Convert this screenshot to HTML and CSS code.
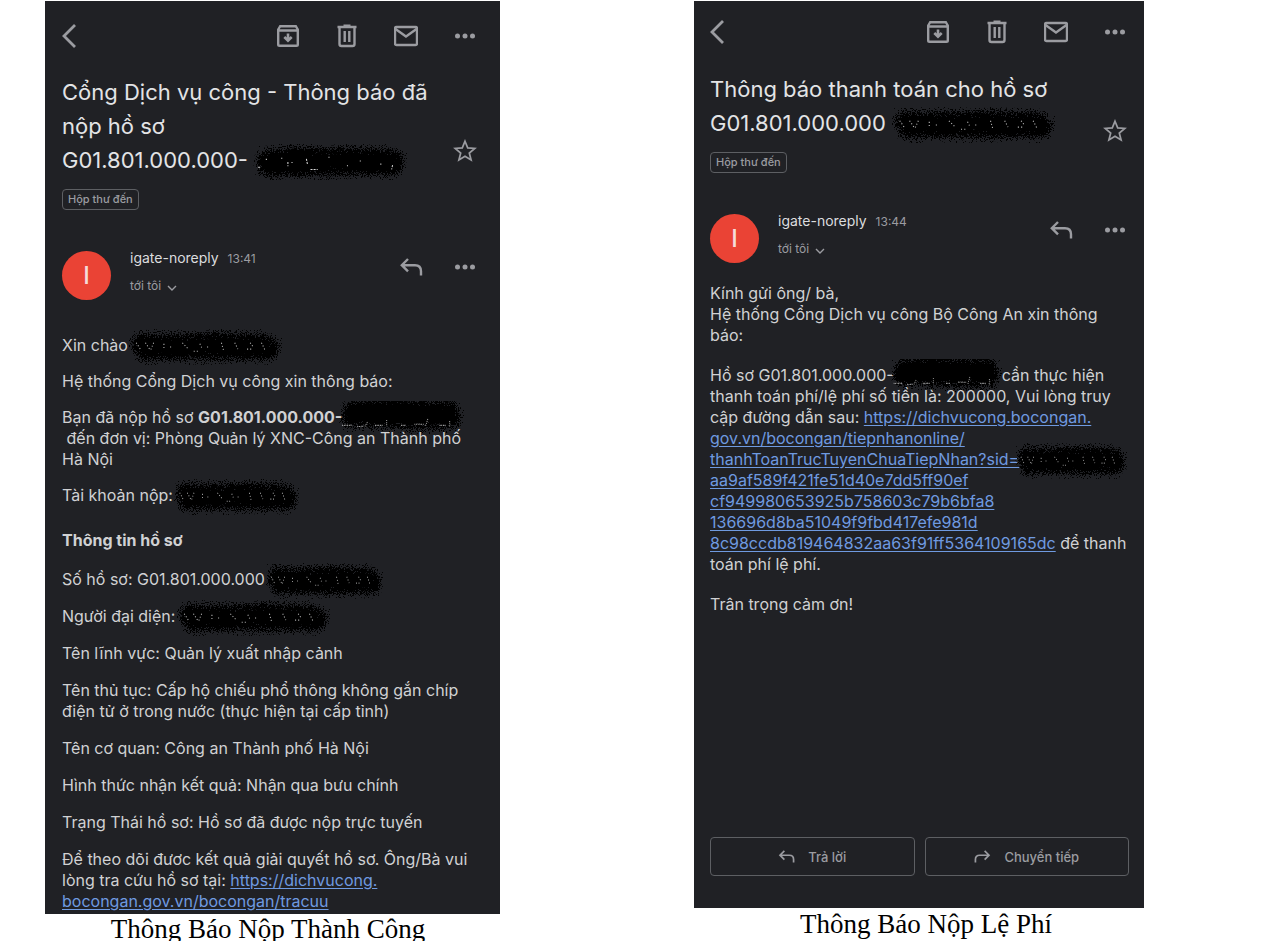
FILE: index.html
```
<!DOCTYPE html>
<html lang="vi">
<head>
<meta charset="utf-8">
<title>Thông báo hồ sơ</title>
<link rel="stylesheet" href="styles.css">
</head>
<body>
<svg class="defs" aria-hidden="true">
  <defs>
    <filter id="spray" filterUnits="userSpaceOnUse" x="-10" y="-12" width="170" height="58" color-interpolation-filters="sRGB">
      <feTurbulence type="fractalNoise" baseFrequency="0.9" numOctaves="2" seed="4" result="n"/>
      <feDisplacementMap in="SourceGraphic" in2="n" scale="24" xChannelSelector="R" yChannelSelector="G"/>
    </filter>
    <symbol id="i-back" viewBox="0 0 24 24"><path d="M17 1 6 12l11 11" fill="none" stroke="currentColor" stroke-width="2.8"/></symbol>
    <symbol id="i-archive" viewBox="0 0 24 24"><path d="M2.200 5.500 4.200 2.200h15.600l2 3.300V20.500q0 1.300-1.300 1.300h-17q-1.300 0-1.300-1.300zM2 6.500h20" fill="none" stroke="currentColor" stroke-width="2.400"/><path d="M12 9.500v7M8.300 13l3.700 3.700 3.700-3.700" fill="none" stroke="currentColor" stroke-width="2.600"/></symbol>
    <symbol id="i-trash" viewBox="0 0 24 24"><path d="M2.500 3h19M8.500 1.700h7M4.500 3v17q0 2 2 2h11q2 0 2-2V3M9.700 7v11M14.300 7v11" fill="none" stroke="currentColor" stroke-width="2.400"/></symbol>
    <symbol id="i-mail" viewBox="0 0 24 24"><rect x="1" y="3" width="22" height="18" rx="1.500" fill="none" stroke="currentColor" stroke-width="2.400"/><path d="m1.500 5 10.500 7.500L22.500 5" fill="none" stroke="currentColor" stroke-width="2.400"/></symbol>
    <symbol id="i-more" viewBox="0 0 24 24"><g fill="currentColor"><circle cx="4.500" cy="12" r="2.500"/><circle cx="12" cy="12" r="2.500"/><circle cx="19.500" cy="12" r="2.500"/></g></symbol>
    <symbol id="i-star" viewBox="0 0 24 24"><path d="m12 2.200 2.700 6.700 7.100.5-5.500 4.600 1.800 7L12 17.200 5.900 21l1.800-7-5.500-4.600 7.100-.5z" fill="none" stroke="currentColor" stroke-width="1.700"/></symbol>
    <symbol id="i-reply" viewBox="0 0 24 24"><path d="M9 4 2.800 10.200 9 16.400M3 10.200h13q6 0 6 6V20.500" fill="none" stroke="currentColor" stroke-width="2.400"/></symbol>
    <symbol id="i-forward" viewBox="0 0 24 24"><path d="m15 4 6.200 6.200L15 16.400M21 10.200H8q-6 0-6 6V20.500" fill="none" stroke="currentColor" stroke-width="2.400"/></symbol>
    <symbol id="i-down" viewBox="0 0 10 10"><path d="m1 3 4 4 4-4" fill="none" stroke="currentColor" stroke-width="1.400"/></symbol>
    <symbol id="s-a" viewBox="0 0 150 34" preserveAspectRatio="none"><g filter="url(#spray)" fill="none"><path d="M14 17 40 13 70 15 100 14 136 16M16 20 45 20 80 19 136 19" stroke="#000" stroke-width="21" stroke-linecap="round"/></g><path d="M5 22h3M13 14v1M28 13v1M34 17v4M38 17v1M52 14l1 5M56 24h7M74 12v1M92 20v1M104 16h1M124 19h1M136 20l-1 4" fill="none" stroke="#d8d8d8" stroke-width="1" stroke-dasharray="2 1"/></symbol>
    <symbol id="s-b" viewBox="0 0 150 34" preserveAspectRatio="none"><g filter="url(#spray)" fill="none"><path d="M13 14 45 15 90 13 134 15M17 20 60 19 95 20 138 19" stroke="#000" stroke-width="19" stroke-linecap="round"/></g><path d="m8 13 4 6M17 13l4 6M25 13l-3 7M35 14v4M41 17h1M53 13l6 6M64 21h4M70 14l2 4M77 17h1M91 13l2 7M104 13l3 6M116 19h6M119 13l3 4M130 13l4 8" fill="none" stroke="#bbb" stroke-width="1" stroke-dasharray="1 2"/></symbol>
    <symbol id="s-c" viewBox="0 0 150 34" preserveAspectRatio="none"><g filter="url(#spray)" fill="none"><path d="M17 9 60 7 105 9 134 10M14 15 50 15 90 17 136 16" stroke="#000" stroke-width="19" stroke-linecap="round"/></g><path d="M5 23h12M23 24h8M35 20l-3 4M44 23h9M58 18v5M75 23h6M91 22h12M107 17l-3 7M121 23h8M133 19v5" fill="none" stroke="#bbb" stroke-width="1" stroke-dasharray="1 1"/></symbol>
  </defs>
</svg>
<main class="board">
  <figure class="shot shot-submitted">
    <article class="mail">
      <header class="bar">
        <button class="icon back" aria-label="Quay lại"><svg><use href="#i-back"/></svg></button>
        <button class="icon" aria-label="Lưu trữ"><svg><use href="#i-archive"/></svg></button>
        <button class="icon" aria-label="Xóa"><svg><use href="#i-trash"/></svg></button>
        <button class="icon" aria-label="Chưa đọc"><svg><use href="#i-mail"/></svg></button>
        <button class="icon" aria-label="Thêm"><svg><use href="#i-more"/></svg></button>
      </header>
      <div class="subject">
        <h1>Cổng Dịch vụ công - Thông báo đã<br>nộp hồ sơ<br>G01.801.000.000-<svg class="ink ink-l"><use href="#s-a"/></svg></h1>
        <button class="icon star" aria-label="Gắn dấu sao"><svg><use href="#i-star"/></svg></button>
      </div>
      <span class="chip">Hộp thư đến</span>
      <div class="sender">
        <span class="avatar">I</span>
        <div class="who"><p class="name">igate-noreply <time>13:41</time></p><button class="to">tới tôi <svg><use href="#i-down"/></svg></button></div>
        <button class="icon" aria-label="Trả lời thư"><svg><use href="#i-reply"/></svg></button>
        <button class="icon" aria-label="Tùy chọn"><svg><use href="#i-more"/></svg></button>
      </div>
      <div class="text">
        <p>Xin chào <svg class="ink ink-l"><use href="#s-b"/></svg></p>
        <p>Hệ thống Cổng Dịch vụ công xin thông báo:</p>
        <p>Bạn đã nộp hồ sơ <b>G01.801.000.000-</b><svg class="ink ink-m"><use href="#s-c"/></svg><br>&nbsp;đến đơn vị: Phòng Quản lý XNC-Công an Thành phố<br>Hà Nội</p>
        <p>Tài khoản nộp: <svg class="ink ink-m"><use href="#s-b"/></svg></p>
      </div>
      <h2>Thông tin hồ sơ</h2>
      <div class="text details">
        <p>Số hồ sơ: G01.801.000.000 <svg class="ink ink-s"><use href="#s-b"/></svg></p>
        <p>Người đại diện: <svg class="ink ink-l"><use href="#s-b"/></svg></p>
        <p>Tên lĩnh vực: Quản lý xuất nhập cảnh</p>
        <p>Tên thủ tục: Cấp hộ chiếu phổ thông không gắn chíp<br>điện tử ở trong nước (thực hiện tại cấp tỉnh)</p>
        <p>Tên cơ quan: Công an Thành phố Hà Nội</p>
        <p>Hình thức nhận kết quả: Nhận qua bưu chính</p>
        <p>Trạng Thái hồ sơ: Hồ sơ đã được nộp trực tuyến</p>
        <p>Để theo dõi đươc kết quả giải quyết hồ sơ. Ông/Bà vui<br>lòng tra cứu hồ sơ tại: <a href="#tracuu">https://dichvucong.<br>bocongan.gov.vn/bocongan/tracuu</a></p>
      </div>
    </article>
    <figcaption>Thông Báo Nộp Thành Công</figcaption>
  </figure>

  <figure class="shot shot-payment">
    <article class="mail">
      <header class="bar">
        <button class="icon back" aria-label="Quay lại"><svg><use href="#i-back"/></svg></button>
        <button class="icon" aria-label="Lưu trữ"><svg><use href="#i-archive"/></svg></button>
        <button class="icon" aria-label="Xóa"><svg><use href="#i-trash"/></svg></button>
        <button class="icon" aria-label="Chưa đọc"><svg><use href="#i-mail"/></svg></button>
        <button class="icon" aria-label="Thêm"><svg><use href="#i-more"/></svg></button>
      </header>
      <div class="subject">
        <h1>Thông báo thanh toán cho hồ sơ<br>G01.801.000.000<svg class="ink ink-xl"><use href="#s-b"/></svg></h1>
        <button class="icon star" aria-label="Gắn dấu sao"><svg><use href="#i-star"/></svg></button>
      </div>
      <span class="chip">Hộp thư đến</span>
      <div class="sender">
        <span class="avatar">I</span>
        <div class="who"><p class="name">igate-noreply <time>13:44</time></p><button class="to">tới tôi <svg><use href="#i-down"/></svg></button></div>
        <button class="icon" aria-label="Trả lời thư"><svg><use href="#i-reply"/></svg></button>
        <button class="icon" aria-label="Tùy chọn"><svg><use href="#i-more"/></svg></button>
      </div>
      <div class="text">
        <p>Kính gửi ông/ bà,<br>Hệ thống Cổng Dịch vụ công Bộ Công An xin thông<br>báo:</p>
        <p>Hồ sơ G01.801.000.000-<svg class="ink ink-xs"><use href="#s-c"/></svg>cần thực hiện<br>thanh toán phí/lệ phí số tiền là: 200000, Vui lòng truy<br>cập đường dẫn sau: <a href="#thanhtoan">https://dichvucong.bocongan.<br>gov.vn/bocongan/tiepnhanonline/<br>thanhToanTrucTuyenChuaTiepNhan?sid=<svg class="ink ink-xs"><use href="#s-b"/></svg><br>aa9af589f421fe51d40e7dd5ff90ef<br>cf949980653925b758603c79b6bfa8<br>136696d8ba51049f9fbd417efe981d<br>8c98ccdb819464832aa63f91ff5364109165dc</a> để thanh<br>toán phí lệ phí.</p>
        <p>Trân trọng cảm ơn!</p>
      </div>
      <footer class="actions">
        <button><svg><use href="#i-reply"/></svg>Trả lời</button>
        <button><svg><use href="#i-forward"/></svg>Chuyển tiếp</button>
      </footer>
    </article>
    <figcaption>Thông Báo Nộp Lệ Phí</figcaption>
  </figure>
</main>
</body>
</html>
```
FILE: styles.css
```
* { box-sizing: border-box; }
body {
  margin: 0;
  height: 100vh;
  overflow: hidden;
  background: #fff;
  font-family: Inter, "Noto Sans", sans-serif;
}
h1, h2, p, figure { margin: 0; }
button { padding: 0; border: 0; background: none; color: inherit; font: inherit; }
svg { display: block; }
.defs { position: absolute; width: 0; height: 0; }

.board {
  display: grid;
  grid-template-columns: minmax(0, 455fr) minmax(0, 450fr);
  gap: 194px;
  min-height: 100vh;
  padding: 1px 117px 0 45px;
}
.shot { display: flex; flex-direction: column; }
.mail {
  display: flex;
  flex-direction: column;
  padding: 0 15px 2px 17px;
  background: #202125;
  color: #d0d1d3;
  white-space: nowrap;
}
.shot-payment .mail { padding: 0 15px 32px 16px; min-height: 907px; }

.icon { flex: none; width: 24px; height: 24px; color: #9b9ca1; }
.icon svg { width: 24px; height: 24px; }
.bar { display: flex; gap: 35px; padding: 23px 8px 27px 0; }
.back { margin-right: auto; margin-left: -4px; }
.shot-payment .bar { padding: 19px 2px 28px 0; }

.subject { display: flex; justify-content: space-between; align-items: flex-end; padding-right: 8px; }
.shot-payment .subject { padding-right: 2px; }
h1 { font-size: 22px; line-height: 34px; font-weight: 400; color: #e3e4e6; }
.star { margin-bottom: 14px; }
.shot-payment .star { margin-bottom: -3px; }
.chip {
  align-self: flex-start;
  margin-top: 12px;
  padding: 0 5px;
  border: 1px solid #5d5f63;
  border-radius: 4px;
  font-size: 11px;
  line-height: 19px;
  font-weight: 500;
  color: #9b9ca1;
}

.sender { display: flex; margin-top: 41px; padding-right: 8px; gap: 30px; }
.shot-payment .sender { padding-right: 2px; }
.avatar {
  width: 49px;
  height: 49px;
  margin-right: -11px;
  border-radius: 50%;
  background: #ea4335;
  color: #f5dcd9;
  font-size: 24px;
  line-height: 49px;
  font-weight: 500;
  text-align: center;
}
.who { flex: 1; }
.name { font-size: 14px; line-height: 14px; color: #dcdddf; }
.name time { margin-left: 5px; font-size: 12px; color: #9b9ca1; }
.to { display: flex; align-items: center; gap: 6px; margin-top: 13px; font-size: 12px; line-height: 14px; color: #9b9ca1; }
.to svg { width: 10px; height: 10px; margin-top: 4px; }
.sender .icon { margin-top: 4px; }

.text { display: grid; gap: 15px; margin-top: 35px; font-size: 16px; line-height: 21px; }
.shot-payment .text { gap: 19px; margin-top: 20px; }
.text a { color: #6f9ae0; text-underline-offset: 2px; }
h2 { margin-top: 24px; font-size: 16px; line-height: 21px; font-weight: 700; }
.details { gap: 16px; margin-top: 18px; }

.ink { display: inline-block; height: 36px; margin: -12px 0 -12px -4px; vertical-align: middle; overflow: visible; }
h1 .ink { margin-left: 5px; }
.ink-xs { width: 112px; }
.ink-s { width: 118px; }
.ink-m { width: 126px; }
.ink-l { width: 154px; }
.ink-xl { width: 164px; }

.actions { display: grid; grid-template-columns: 1fr 1fr; gap: 10px; margin-top: auto; }
.actions button {
  display: flex;
  align-items: center;
  justify-content: center;
  gap: 13px;
  height: 39px;
  border: 1px solid #5d5f63;
  border-radius: 4px;
  color: #9b9ca1;
  font-size: 13px;
  font-weight: 500;
}
.actions svg { width: 17px; height: 17px; }

figcaption {
  padding-right: 9px;
  font-family: "Liberation Serif", serif;
  font-size: 27px;
  line-height: 30px;
  text-align: center;
  color: #000;
}
.shot-payment figcaption { padding: 0 0 0 14px; line-height: 33px; }
```
